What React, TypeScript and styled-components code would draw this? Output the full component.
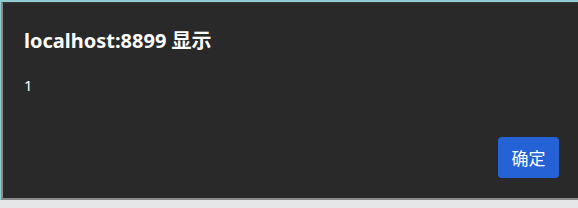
import React from 'react';
import styled, { createGlobalStyle } from 'styled-components';

const GlobalStyle = createGlobalStyle`
  html, body {
    margin: 0;
    padding: 0;
    background: #e6e6e9;
    font-family: "Noto Sans", "Noto Sans CJK SC", sans-serif;
  }
`;

const Page = styled.div`
  width: 578px;
  height: 208px;
  box-sizing: border-box;
  padding: 2px 0 0 1px;
  background: linear-gradient(#e6e6e9, #e6e6e9) 0 200px / 100% 8px no-repeat,
    linear-gradient(90deg, #8fcfd3 0, #8fcfd3 1px, transparent 1px) 0 0 / 100% 200px no-repeat,
    linear-gradient(#8fcfd3, #8fcfd3) 0 0 / 100% 2px no-repeat,
    #2a2a2a;
  overflow: hidden;
`;

const Dialog = styled.div`
  box-sizing: border-box;
  width: 577px;
  height: 198px;
  background: #292929;
  border-left: 2px solid #8b8b8b;
  border-top: 1px solid #3a3a3a;
  border-bottom: 2px solid #8b8b8b;
  padding: 24px 19px 20px 21px;
  display: flex;
  flex-direction: column;
  color: #ffffff;
`;

const Title = styled.h1`
  margin: 0;
  font-size: 20px;
  font-weight: 700;
  line-height: 28px;
`;

const Message = styled.p`
  margin: 19px 0 0;
  font-size: 15px;
  line-height: 22px;
`;

const Footer = styled.div`
  margin-top: auto;
  display: flex;
  justify-content: flex-end;
`;

const Button = styled.button`
  width: 61px;
  height: 41px;
  border: none;
  border-radius: 4px;
  background: #2562d6;
  color: #ffffff;
  font-family: "Noto Sans CJK SC", sans-serif;
  font-size: 17px;
  padding: 0;
`;

export default function App() {
  return (
    <>
      <GlobalStyle />
      <Page>
        <Dialog>
          <Title>localhost:8899 显示</Title>
          <Message>1</Message>
          <Footer>
            <Button>确定</Button>
          </Footer>
        </Dialog>
      </Page>
    </>
  );
}
